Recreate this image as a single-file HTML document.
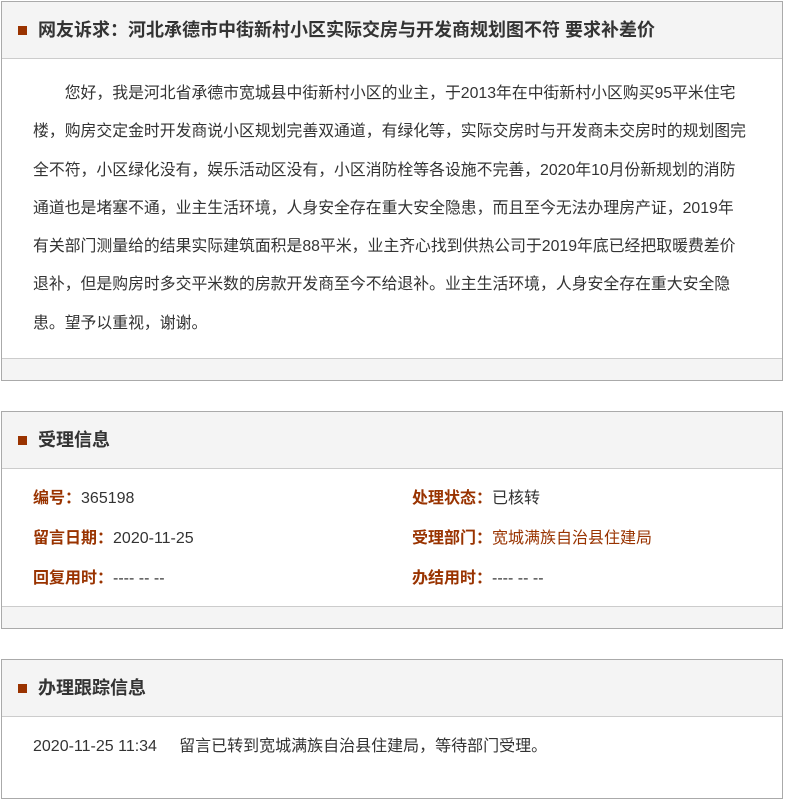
<!DOCTYPE html>
<html><head><meta charset="utf-8"><style>
*{margin:0;padding:0;box-sizing:border-box}
body{width:786px;height:780px;background:#fff;font-family:"Liberation Sans","Noto Sans CJK SC",sans-serif;color:#333;overflow:hidden;position:relative}
.box{position:absolute;left:1px;width:782px;border:1px solid #aaa;background:#fff}
.hd{height:57px;background:#f4f4f4;border-bottom:1px solid #ccc;position:relative}
.hd i{position:absolute;left:16px;top:24px;width:9px;height:9px;background:#9a3300}
.hd b{position:absolute;left:36px;top:17px;font-size:18px;line-height:22px;color:#333;white-space:nowrap}
.ft{height:22px;background:#f4f4f4;border-top:1px solid #ccc}
.txt{padding:16px 0 10px 31px;font-size:15.85px;line-height:38.3px;white-space:nowrap;color:#333}
.row{position:absolute;font-size:16px;white-space:nowrap;line-height:20px}
.row .l{color:#993300;font-weight:bold}
</style></head><body>
<div class="box" style="top:1px;height:380px">
<div class="hd"><i></i><b>网友诉求：河北承德市中街新村小区实际交房与开发商规划图不符 要求补差价</b></div>
<div class="txt" style="height:299px">&emsp;&emsp;您好，我是河北省承德市宽城县中街新村小区的业主，于2013年在中街新村小区购买95平米住宅<br>楼，购房交定金时开发商说小区规划完善双通道，有绿化等，实际交房时与开发商未交房时的规划图完<br>全不符，小区绿化没有，娱乐活动区没有，小区消防栓等各设施不完善，2020年10月份新规划的消防<br>通道也是堵塞不通，业主生活环境，人身安全存在重大安全隐患，而且至今无法办理房产证，2019年<br>有关部门测量给的结果实际建筑面积是88平米，业主齐心找到供热公司于2019年底已经把取暖费差价<br>退补，但是购房时多交平米数的房款开发商至今不给退补。业主生活环境，人身安全存在重大安全隐<br>患。望予以重视，谢谢。</div>
<div class="ft"></div>
</div>
<div class="box" style="top:411px;height:218px">
<div class="hd"><i></i><b>受理信息</b></div>
<div style="height:137px;position:relative">
<div class="row" style="left:31px;top:20px"><span class="l">编号：</span>365198</div>
<div class="row" style="left:410px;top:20px"><span class="l">处理状态：</span>已核转</div>
<div class="row" style="left:31px;top:60px"><span class="l">留言日期：</span>2020-11-25</div>
<div class="row" style="left:410px;top:60px"><span class="l">受理部门：</span><span style="color:#993300">宽城满族自治县住建局</span></div>
<div class="row" style="left:31px;top:100px"><span class="l">回复用时：</span>---- -- --</div>
<div class="row" style="left:410px;top:100px"><span class="l">办结用时：</span>---- -- --</div>
</div>
<div class="ft"></div>
</div>
<div class="box" style="top:659px;height:140px">
<div class="hd"><i></i><b>办理跟踪信息</b></div>
<div class="row" style="left:31px;top:77px">2020-11-25 11:34&nbsp;&nbsp;&nbsp;&nbsp;&nbsp;留言已转到宽城满族自治县住建局，等待部门受理。</div>
</div>
</body></html>
